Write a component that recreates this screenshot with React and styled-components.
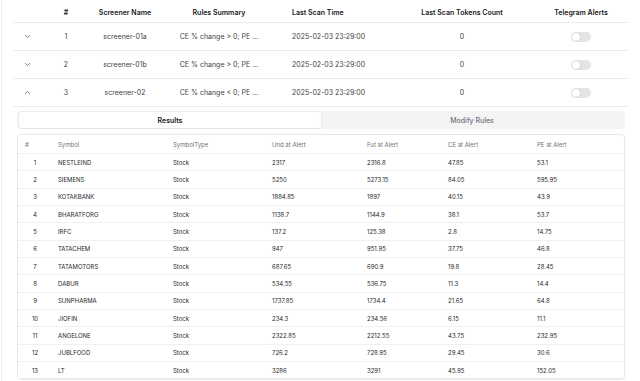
import React from "react";
import styled, { createGlobalStyle } from "styled-components";
import { ChevronDown, ChevronUp } from "lucide-react";

const Global = createGlobalStyle`
  html, body { margin: 0; padding: 0; background: #ffffff; }
  body { font-family: Inter, "Noto Sans", Arial, sans-serif; color: #27272a; }
  * { box-sizing: border-box; }
`;

const Page = styled.div`
  margin-left: 1px;
  border-left: 1px solid #f1f1f3;
  padding: 0 11px 0 11px;
  width: 639px;
  min-height: 381px;
`;

const cols = "28px 50px 68px 120px 112px 142px 96px";

const HeadRow = styled.div`
  display: grid;
  grid-template-columns: ${cols};
  height: 23px;
  padding-top: 4px;
  border-bottom: 1px solid #ececee;
  font-size: 7px;
  font-weight: 600;
  color: #18181b;
`;

const Row = styled.div`
  display: grid;
  grid-template-columns: ${cols};
  height: 28px;
  align-items: center;
  border-bottom: 1px solid #ececee;
  font-size: 7px;
  color: #3f3f46;
`;

const Cell = styled.div`
  display: flex;
  align-items: center;
  justify-content: ${(p) => (p.$left ? "flex-start" : "center")};
  padding-left: ${(p) => (p.$left ? "13px" : "0")};
  white-space: nowrap;
  line-height: 18px;
`;

const Chevron = styled.span`
  display: flex;
  color: #52525b;
`;

const Track = styled.span`
  display: flex;
  align-items: center;
  width: 20px;
  height: 10px;
  border-radius: 5px;
  background: #e4e4e7;
  padding: 1px;
`;

const Knob = styled.span`
  width: 8px;
  height: 8px;
  border-radius: 50%;
  background: #ffffff;
  box-shadow: 0 0 1px rgba(0, 0, 0, 0.25);
`;

const Expanded = styled.div`
  padding: 4px 4px 0 4px;
`;

const TabList = styled.div`
  display: grid;
  grid-template-columns: 1fr 1fr;
  height: 18px;
  padding: 1px 2px;
  border-radius: 4px;
  background: #f4f4f5;
`;

const Tab = styled.div`
  display: flex;
  align-items: center;
  justify-content: center;
  border-radius: 3px;
  font-size: 7px;
  font-weight: ${(p) => (p.$active ? 600 : 500)};
  color: ${(p) => (p.$active ? "#18181b" : "#71717a")};
  background: ${(p) => (p.$active ? "#ffffff" : "transparent")};
  box-shadow: ${(p) => (p.$active ? "0 0 0 0.5px #e4e4e7, 0 1px 1px rgba(0,0,0,0.06)" : "none")};
`;

const Card = styled.div`
  margin-top: 5px;
  border: 1px solid #e8e8eb;
  border-radius: 4px;
  overflow: hidden;
`;

const icols = "40px 115px 99px 95px 81px 89px 87px";

const IHead = styled.div`
  display: grid;
  grid-template-columns: ${icols};
  height: 19px;
  align-items: center;
  border-bottom: 1px solid #f0f0f2;
  font-size: 6px;
  color: #71717a;
`;

const IRow = styled.div`
  display: grid;
  grid-template-columns: ${icols};
  height: 17.33px;
  align-items: center;
  border-bottom: 1px solid #f0f0f2;
  font-size: 6px;
  color: #27272a;
`;

const ICell = styled.div`
  white-space: nowrap;
  padding: ${(p) => (p.$num ? "0 13px 0 7px" : "0")};
  text-align: ${(p) => (p.$center ? "center" : "left")};
`;

const screeners = [
  { id: 1, name: "screener-01a", rules: "CE % change > 0; PE ...", open: false },
  { id: 2, name: "screener-01b", rules: "CE % change > 0; PE ...", open: false },
  { id: 3, name: "screener-02", rules: "CE % change < 0; PE ...", open: true },
];

const results = [
  ["NESTLEIND", "2317", "2316.8", "47.85", "53.1"],
  ["SIEMENS", "5250", "5273.15", "84.05", "595.95"],
  ["KOTAKBANK", "1884.85", "1897", "40.15", "43.9"],
  ["BHARATFORG", "1138.7", "1144.9", "38.1", "53.7"],
  ["IRFC", "137.2", "125.38", "2.8", "14.75"],
  ["TATACHEM", "947", "951.95", "37.75", "46.8"],
  ["TATAMOTORS", "687.65", "690.9", "19.8", "28.45"],
  ["DABUR", "534.55", "536.75", "11.3", "14.4"],
  ["SUNPHARMA", "1737.85", "1734.4", "21.65", "64.8"],
  ["JIOFIN", "234.3", "234.56", "6.15", "11.1"],
  ["ANGELONE", "2322.85", "2212.55", "43.75", "232.95"],
  ["JUBLFOOD", "726.2", "728.95", "29.45", "30.6"],
  ["LT", "3286", "3291", "45.95", "152.05"],
];

export default function App() {
  return (
    <>
      <Global />
      <Page>
        <HeadRow>
          <Cell />
          <Cell>#</Cell>
          <Cell>Screener Name</Cell>
          <Cell>Rules Summary</Cell>
          <Cell $left>Last Scan Time</Cell>
          <Cell>Last Scan Tokens Count</Cell>
          <Cell>Telegram Alerts</Cell>
        </HeadRow>
        {screeners.map((s) => (
          <React.Fragment key={s.id}>
            <Row>
              <Cell>
                <Chevron>
                  {s.open ? <ChevronUp size={9} strokeWidth={2} /> : <ChevronDown size={9} strokeWidth={2} />}
                </Chevron>
              </Cell>
              <Cell>{s.id}</Cell>
              <Cell>{s.name}</Cell>
              <Cell>{s.rules}</Cell>
              <Cell $left>2025-02-03 23:29:00</Cell>
              <Cell>0</Cell>
              <Cell>
                <Track>
                  <Knob />
                </Track>
              </Cell>
            </Row>
            {s.open && (
              <Expanded>
                <TabList>
                  <Tab $active>Results</Tab>
                  <Tab>Modify Rules</Tab>
                </TabList>
                <Card>
                  <IHead>
                    <ICell $num>#</ICell>
                    <ICell>Symbol</ICell>
                    <ICell>SymbolType</ICell>
                    <ICell>Und at Alert</ICell>
                    <ICell>Fut at Alert</ICell>
                    <ICell>CE at Alert</ICell>
                    <ICell>PE at Alert</ICell>
                  </IHead>
                  {results.map((r, i) => (
                    <IRow key={r[0]}>
                      <ICell $num $center>{i + 1}</ICell>
                      <ICell>{r[0]}</ICell>
                      <ICell>Stock</ICell>
                      <ICell>{r[1]}</ICell>
                      <ICell>{r[2]}</ICell>
                      <ICell>{r[3]}</ICell>
                      <ICell>{r[4]}</ICell>
                    </IRow>
                  ))}
                </Card>
              </Expanded>
            )}
          </React.Fragment>
        ))}
      </Page>
    </>
  );
}
